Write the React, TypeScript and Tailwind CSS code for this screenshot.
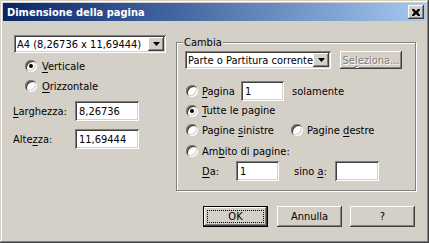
import React from "react";

const FACE = "bg-[#d4d0c8]";
const SUNKEN =
  "shadow-[inset_1px_1px_0_#808080,inset_-1px_-1px_0_#ffffff,inset_2px_2px_0_#404040,inset_-2px_-2px_0_#d4d0c8]";
const RAISED =
  "shadow-[inset_-1px_-1px_0_#404040,inset_1px_1px_0_#ffffff,inset_-2px_-2px_0_#808080,inset_2px_2px_0_#d4d0c8]";

function U({ children }: { children: React.ReactNode }) {
  return <span className="underline underline-offset-[2px] decoration-1">{children}</span>;
}

function Radio({ checked }: { checked?: boolean }) {
  return (
    <div className={`relative w-[12px] h-[12px] shrink-0 rounded-full bg-white ${SUNKEN}`}>
      {checked && (
        <div className="absolute left-[4px] top-[4px] w-[4px] h-[4px] rounded-full bg-black" />
      )}
    </div>
  );
}

function Arrow() {
  return (
    <div className={`w-[16px] h-[14px] ${FACE} ${RAISED} flex items-center justify-center`}>
      <svg width="7" height="4" viewBox="0 0 7 4">
        <path d="M0 0h7L3.5 4z" fill="#000" />
      </svg>
    </div>
  );
}

function Combo({ w, text }: { w: number; text: string }) {
  return (
    <div
      className={`h-[18px] bg-white ${SUNKEN} flex items-center pl-[3px] pr-[2px] shrink-0`}
      style={{ width: w }}
    >
      <span className="flex-1 whitespace-nowrap overflow-hidden">{text}</span>
      <Arrow />
    </div>
  );
}

function Field({ w, value }: { w: number; value?: string }) {
  return (
    <div
      className={`h-[20px] bg-white ${SUNKEN} flex items-center pl-[4px] shrink-0 whitespace-nowrap`}
      style={{ width: w }}
    >
      {value}
    </div>
  );
}

function Button({ children, def }: { children: React.ReactNode; def?: boolean }) {
  if (def) {
    return (
      <div className="w-[65px] h-[21px] border border-black">
        <div className={`relative w-full h-full ${FACE} ${RAISED} flex items-center justify-center`}>
          <div className="absolute left-[3px] top-[3px] right-[3px] bottom-[3px] border border-dotted border-black" />
          {children}
        </div>
      </div>
    );
  }
  return (
    <div className={`w-[65px] h-[21px] ${FACE} ${RAISED} flex items-center justify-center`}>
      {children}
    </div>
  );
}

export default function App() {
  return (
    <div
      className={`w-[429px] h-[243px] ${FACE} p-[3px] flex flex-col text-[11px] leading-[13px] text-black font-['DejaVu_Sans_Condensed','Liberation_Sans',sans-serif] shadow-[inset_-1px_-1px_0_#404040,inset_1px_1px_0_#d4d0c8,inset_-2px_-2px_0_#808080,inset_2px_2px_0_#ffffff]`}
    >
      {/* Title bar */}
      <div className="h-[18px] bg-gradient-to-r from-[#0a246a] to-[#a6caf0] flex items-center pl-[4px] pr-[2px]">
        <span className="flex-1 text-white font-bold whitespace-nowrap">Dimensione della pagina</span>
        <div className={`w-[16px] h-[14px] ${FACE} ${RAISED} flex items-center justify-center`}>
          <svg width="8" height="7" viewBox="0 0 8 7">
            <path
              d="M0 0h2l2 2 2-2h2v1L6 3.5 8 6v1H6L4 5 2 7H0V6l2-2.5L0 1z"
              fill="#000"
            />
          </svg>
        </div>
      </div>

      {/* Body */}
      <div className="flex flex-1">
        {/* Left column */}
        <div className="w-[173px] pl-[10px] pt-[14px] flex flex-col">
          <div className="ml-[1px]">
            <Combo w={152} text="A4 (8,26736 x 11,69444)" />
          </div>
          <div className="mt-[3px] h-[20px] flex items-center pl-[12px] gap-[5px]">
            <Radio checked />
            <span>
              <U>V</U>erticale
            </span>
          </div>
          <div className="h-[20px] flex items-center pl-[12px] gap-[5px]">
            <Radio />
            <span>
              <U>O</U>rizzontale
            </span>
          </div>
          <div className="mt-[5px] h-[20px] flex items-center">
            <span className="w-[62px]">
              <U>L</U>arghezza:
            </span>
            <Field w={64} value="8,26736" />
          </div>
          <div className="mt-[8px] h-[20px] flex items-center">
            <span className="w-[62px]">
              Alte<U>z</U>za:
            </span>
            <Field w={64} value="11,69444" />
          </div>
        </div>

        {/* Right column */}
        <div className="flex flex-col">
          <div className="relative mt-[21px] w-[240px] h-[149px] border border-[#808080] shadow-[1px_1px_0_#ffffff,inset_1px_1px_0_#ffffff] flex flex-col pl-[9px]">
            <span className={`absolute left-[6px] top-[-7px] px-[1px] ${FACE}`}>Cambia</span>
            <div className="mt-[8px] flex items-center gap-[9px] -ml-[1px]">
              <Combo w={146} text="Parte o Partitura corrente" />
              <div
                className={`w-[62px] h-[18px] ${FACE} ${RAISED} flex items-center justify-center text-[#808080] [text-shadow:1px_1px_0_#ffffff]`}
              >
                <span>
                  Se<U>l</U>eziona...
                </span>
              </div>
            </div>
            <div className="mt-[12px] h-[20px] flex items-center">
              <Radio />
              <span className="ml-[4px] w-[39px]">
                <U>P</U>agina
              </span>
              <Field w={43} value="1" />
              <span className="ml-[8px]">solamente</span>
            </div>
            <div className="h-[19px] flex items-center">
              <Radio checked />
              <span className="ml-[4px]">
                <U>T</U>utte le pagine
              </span>
            </div>
            <div className="h-[20px] flex items-center">
              <div className="w-[105px] flex items-center">
                <Radio />
                <span className="ml-[4px] whitespace-nowrap">
                  Pagine <U>s</U>inistre
                </span>
              </div>
              <Radio />
              <span className="ml-[4px] whitespace-nowrap">
                Pagine <U>d</U>estre
              </span>
            </div>
            <div className="mt-[1px] h-[20px] flex items-center">
              <Radio />
              <span className="ml-[4px]">
                Am<U>b</U>ito di pagine:
              </span>
            </div>
            <div className="h-[20px] flex items-center pl-[16px]">
              <span className="w-[34px]">
                <U>D</U>a:
              </span>
              <Field w={43} value="1" />
              <span className="ml-[15px] w-[41px] whitespace-nowrap">
                sino <U>a</U>:
              </span>
              <Field w={44} />
            </div>
          </div>
          <div className="mt-[15px] ml-[27px] flex">
            <Button def>OK</Button>
            <div className="ml-[9px]">
              <Button>Annulla</Button>
            </div>
            <div className="ml-[8px]">
              <Button>?</Button>
            </div>
          </div>
        </div>
      </div>
    </div>
  );
}
